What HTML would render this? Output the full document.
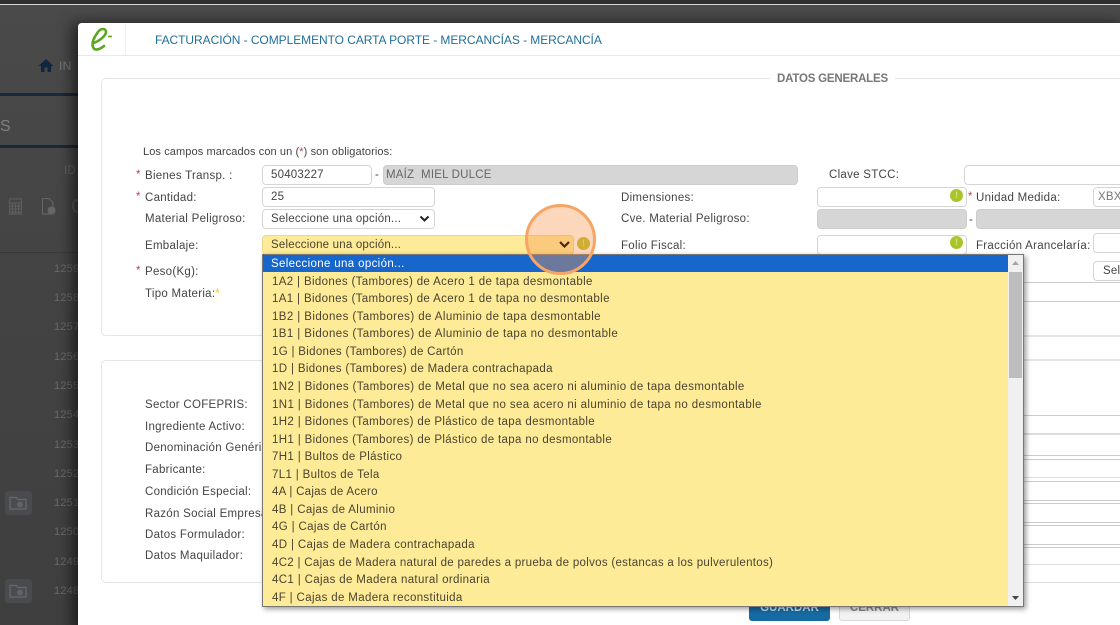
<!DOCTYPE html>
<html lang="es"><head><meta charset="utf-8"><title>Facturación</title>
<style>
html,body{margin:0;padding:0;width:1120px;height:625px;overflow:hidden;background:#444}
#r{position:relative;width:1120px;height:625px;overflow:hidden;font-family:"Liberation Sans",sans-serif;font-size:11.5px;color:#444;filter:blur(.3px)}
#r div,#r span.a,#r svg{position:absolute}
.t{white-space:nowrap;line-height:14px;letter-spacing:.28px;margin-top:1px}
.i{background:#fff;border:1px solid #d5d5d5;border-radius:4px;box-sizing:border-box;white-space:nowrap;line-height:19px;padding-left:8px;letter-spacing:.2px;color:#444;overflow:hidden}
.g{background:#d6d6d6;border:1px solid #ccc;border-radius:4px;box-sizing:border-box}
.l{background:#ccc;height:1px;left:1024px;width:96px}
.d{width:13px;height:13px;border-radius:50%;background:#a8c62c;color:#d5e27a;font-size:9px;line-height:13px;text-align:center;font-weight:bold}
.s{color:#b04a50}
.o{left:272px;white-space:nowrap;line-height:17px;height:17px;letter-spacing:.35px;color:#4b4330;margin-top:1px}
.b{color:#6a6a6a;font-size:11px;white-space:nowrap;left:54px;letter-spacing:.2px}
</style></head><body><div id="r">
<!-- backdrop -->
<div style="left:0;top:0;width:1120px;height:625px;background:linear-gradient(#4a4a4a,#434343 300px,#3f3f3f)"></div>
<div style="left:0;top:0;width:1120px;height:4px;background:#2e2e2e"></div>
<div style="left:0;top:4px;width:1120px;height:1px;background:#d8d8d8"></div>
<svg style="left:38px;top:58px" width="16" height="15" viewBox="0 0 16 15"><path d="M8 1 L0.5 8 H3 V14 H6.5 V9.5 H9.5 V14 H13 V8 H15.5Z" fill="#10263e"/></svg>
<div class="t" style="left:59px;top:58px;color:#777;font-size:12px">IN</div>
<div style="left:0;top:93px;width:78px;height:3px;background:#17293a"></div>
<div style="left:0;top:145px;width:78px;height:3px;background:#17293a"></div>
<div class="t" style="left:0;top:119px;color:#808080;font-size:16px">S</div>
<div class="t" style="left:64px;top:163px;color:#666">ID</div>
<svg style="left:8px;top:197px" width="15" height="19" viewBox="0 0 15 19"><path d="M1.5 2H13.5V17H1.5ZM1.5 6H13.5M1.5 9H13.5M1.5 12H13.5M1.5 15H13.5M4.5 6V17M7.5 6V17M10.5 6V17" fill="none" stroke="#5e5e5e" stroke-width="1"/></svg>
<svg style="left:40px;top:197px" width="18" height="19" viewBox="0 0 18 19"><path d="M2.5 1.5H9L13 5.5V17H2.5Z" fill="none" stroke="#666" stroke-width="1"/><circle cx="11.5" cy="13.5" r="4" fill="#666"/></svg>
<div style="left:72px;top:199px;width:10px;height:14px;border:2px solid #5a5a5a;border-radius:50%;box-sizing:border-box"></div>
<div style="left:0;top:252px;width:78px;height:1px;background:#3a3a3a"></div>
<div class="b" style="top:263px">1259</div><div class="b" style="top:292px">1258</div><div class="b" style="top:321px">1257</div><div class="b" style="top:351px">1256</div><div class="b" style="top:380px">1255</div><div class="b" style="top:409px">1254</div><div class="b" style="top:439px">1253</div><div class="b" style="top:468px">1252</div><div class="b" style="top:497px">1251</div><div class="b" style="top:526px">1250</div><div class="b" style="top:556px">1249</div><div class="b" style="top:585px">1248</div>
<div style="left:5px;top:491px;width:27px;height:24px;background:#494b4e;border-radius:3px"></div>
<svg style="left:9px;top:495px" width="20" height="16" viewBox="0 0 20 16"><path d="M1 2.5H7L9 4.5H17V14H1Z" fill="none" stroke="#6a6a72" stroke-width="1.2"/><circle cx="11" cy="9.5" r="3" fill="#62626a"/></svg>
<div style="left:5px;top:579px;width:27px;height:24px;background:#494b4e;border-radius:3px"></div>
<svg style="left:9px;top:583px" width="20" height="16" viewBox="0 0 20 16"><path d="M1 2.5H7L9 4.5H17V14H1Z" fill="none" stroke="#6a6a72" stroke-width="1.2"/><circle cx="11" cy="9.5" r="3" fill="#62626a"/></svg>
<!-- modal -->
<div style="left:78px;top:23px;width:1050px;height:610px;background:#fff;border-radius:4px 0 0 0;box-shadow:-6px 0 14px rgba(0,0,0,.55)"></div>
<div style="left:78px;top:23px;width:1042px;height:32px;background:#fff;border-bottom:1px solid #e8e8e8;border-radius:4px 0 0 0"></div>
<div style="left:125px;top:24px;width:1px;height:31px;background:#eee"></div>
<svg style="left:88px;top:25px" width="28" height="28" viewBox="0 0 28 28"><path d="M5 18 C10 17 18 11 18 7 C18 3 13 3 10 7 C6 12 3.5 18 5 22 C6.5 26 11 25 16 21" fill="none" stroke="#5ba51f" stroke-width="2.6" stroke-linecap="round"/><path d="M20 11.5H24" stroke="#5ba51f" stroke-width="1.6"/></svg>
<div class="t" style="left:155px;top:32px;color:#1f6f98;font-size:12px;letter-spacing:-.06px">FACTURACIÓN - COMPLEMENTO CARTA PORTE - MERCANCÍAS - MERCANCÍA</div>
<!-- sections -->
<div style="left:101px;top:78px;width:1030px;height:258px;border:1px solid #e6e6e6;border-radius:5px;box-sizing:border-box"></div>
<div style="left:770px;top:70px;width:125px;height:16px;background:#fff"></div>
<div class="t" style="left:777px;top:71px;color:#777;font-weight:bold;font-size:11.5px;letter-spacing:-.2px">DATOS GENERALES</div>
<div style="left:101px;top:360px;width:1030px;height:223px;border:1px solid #e6e6e6;border-radius:5px;box-sizing:border-box"></div>
<div class="t" style="left:143px;top:144px;font-size:11px;letter-spacing:.1px">Los campos marcados con un (<span class="s">*</span>) son obligatorios:</div>
<div class="t s" style="left:136px;top:167px">*</div><div class="t" style="left:145px;top:168px">Bienes Transp. :</div>
<div class="i" style="left:262px;top:165px;width:110px;height:20px">50403227</div>
<div class="t" style="left:375px;top:167px">-</div>
<div class="g" style="left:383px;top:165px;width:415px;height:20px;color:#666;padding-left:2px;line-height:19px;white-space:nowrap;letter-spacing:.2px">MAÍZ&nbsp; MIEL DULCE</div>
<div class="t" style="left:829px;top:167px">Clave STCC:</div>
<div class="i" style="left:964px;top:165px;width:170px;height:20px"></div>
<div class="t s" style="left:136px;top:189px">*</div><div class="t" style="left:145px;top:190px">Cantidad:</div>
<div class="i" style="left:262px;top:187px;width:173px;height:20px">25</div>
<div class="t" style="left:621px;top:190px">Dimensiones:</div>
<div class="i" style="left:817px;top:187px;width:150px;height:20px"></div>
<div class="d" style="left:950px;top:189px">!</div>
<div class="t s" style="left:968px;top:189px">*</div><div class="t" style="left:976px;top:190px">Unidad Medida:</div>
<div class="i" style="left:1093px;top:187px;width:40px;height:20px;padding-left:4px;color:#777">XBX</div>
<div class="t" style="left:145px;top:211px">Material Peligroso:</div>
<div class="i" style="left:262px;top:209px;width:173px;height:20px">Seleccione una opción...</div>
<svg style="left:419px;top:215px" width="11" height="8" viewBox="0 0 11 8"><path d="M1.5 1.5 L5.5 5.5 L9.5 1.5" fill="none" stroke="#222" stroke-width="2"/></svg>
<div class="t" style="left:621px;top:211px">Cve. Material Peligroso:</div>
<div class="g" style="left:817px;top:209px;width:150px;height:20px"></div>
<div class="t" style="left:969px;top:212px">-</div>
<div class="g" style="left:976px;top:209px;width:150px;height:20px"></div>
<div class="t" style="left:145px;top:238px">Embalaje:</div>
<div class="i" style="left:262px;top:235px;width:312px;height:20px;background:#fdeb98;border-color:#ebd987;color:#4b4330">Seleccione una opción...</div>
<div class="d" style="left:577px;top:237px;background:#b9bb26">!</div>
<div class="t" style="left:621px;top:238px">Folio Fiscal:</div>
<div class="i" style="left:817px;top:235px;width:150px;height:20px"></div>
<div class="d" style="left:950px;top:236px">!</div>
<div class="t" style="left:976px;top:238px">Fracción Arancelaría:</div>
<div class="i" style="left:1093px;top:233px;width:40px;height:20px"></div>
<div class="i" style="left:1093px;top:261px;width:40px;height:20px;padding-left:9px">Seleccionar</div>
<div class="l" style="top:282px"></div><div class="l" style="top:301px"></div>
<div class="t s" style="left:136px;top:263px">*</div><div class="t" style="left:145px;top:264px">Peso(Kg):</div>
<div class="t" style="left:145px;top:286px">Tipo Materia:<span style="color:#e8cf3a">*</span></div>
<div class="t" style="left:145px;top:397px">Sector COFEPRIS:</div>
<div class="t" style="left:145px;top:419px">Ingrediente Activo:</div>
<div class="t" style="left:145px;top:440px">Denominación Genérica:</div>
<div class="t" style="left:145px;top:462px">Fabricante:</div>
<div class="t" style="left:145px;top:484px">Condición Especial:</div>
<div class="t" style="left:145px;top:506px">Razón Social Empresa:</div>
<div class="t" style="left:145px;top:527px">Datos Formulador:</div>
<div class="t" style="left:145px;top:548px">Datos Maquilador:</div>
<div class="l" style="top:336px;background:#e6e6e6"></div><div class="l" style="top:359px;background:#e6e6e6"></div>
<div class="l" style="top:415px"></div><div class="l" style="top:433px;background:#ddd;height:2px"></div><div class="l" style="top:455px"></div><div class="l" style="top:459px"></div><div class="l" style="top:477px;background:#ddd"></div><div class="l" style="top:481px"></div><div class="l" style="top:500px"></div><div class="l" style="top:503px"></div><div class="l" style="top:522px"></div><div class="l" style="top:525px"></div><div class="l" style="top:544px"></div><div class="l" style="top:547px"></div><div class="l" style="top:564px;background:#ddd"></div><div class="l" style="top:582px;background:#ddd"></div>
<!-- buttons -->
<div style="left:749px;top:595px;width:81px;height:26px;background:#166ba3;border-radius:3px;color:#cfe3ef;font-weight:bold;font-size:11.5px;text-align:center;line-height:26px">GUARDAR</div>
<div style="left:839px;top:595px;width:71px;height:26px;background:#f3f3f3;border:1px solid #d8d8d8;box-sizing:border-box;border-radius:3px;color:#888;font-weight:bold;font-size:11.5px;text-align:center;line-height:25px">CERRAR</div>
<!-- dropdown -->
<div style="left:262px;top:254px;width:762px;height:353px;background:#fdeb98;border:1px solid #777;box-sizing:border-box;box-shadow:2px 2px 5px rgba(0,0,0,.4)"></div>
<div style="left:263px;top:255px;width:745px;height:17px;background:#1766cb"></div>
<div style="left:1008px;top:255px;width:15px;height:351px;background:#f0f0f0"></div>
<div style="left:1009px;top:272px;width:13px;height:106px;background:#bdbdbd"></div>
<svg style="left:1011px;top:260px" width="9" height="6"><path d="M4.5 1 L8 5 H1Z" fill="#a5a5a5"/></svg>
<svg style="left:1011px;top:595px" width="9" height="6"><path d="M1 1 H8 L4.5 5Z" fill="#444"/></svg>
<div class="o" style="left:271px;top:255px;color:#fff">Seleccione una opción...</div>
<div class="o" style="top:273px">1A2 | Bidones (Tambores) de Acero 1 de tapa desmontable</div>
<div class="o" style="top:290px">1A1 | Bidones (Tambores) de Acero 1 de tapa no desmontable</div>
<div class="o" style="top:308px;letter-spacing:.41px">1B2 | Bidones (Tambores) de Aluminio de tapa desmontable</div>
<div class="o" style="top:325px;letter-spacing:.41px">1B1 | Bidones (Tambores) de Aluminio de tapa no desmontable</div>
<div class="o" style="top:343px;letter-spacing:.31px">1G | Bidones (Tambores) de Cartón</div>
<div class="o" style="top:360px">1D | Bidones (Tambores) de Madera contrachapada</div>
<div class="o" style="top:378px;letter-spacing:.38px">1N2 | Bidones (Tambores) de Metal que no sea acero ni aluminio de tapa desmontable</div>
<div class="o" style="top:396px;letter-spacing:.38px">1N1 | Bidones (Tambores) de Metal que no sea acero ni aluminio de tapa no desmontable</div>
<div class="o" style="top:413px">1H2 | Bidones (Tambores) de Plástico de tapa desmontable</div>
<div class="o" style="top:431px">1H1 | Bidones (Tambores) de Plástico de tapa no desmontable</div>
<div class="o" style="top:448px">7H1 | Bultos de Plástico</div>
<div class="o" style="top:466px">7L1 | Bultos de Tela</div>
<div class="o" style="top:483px;letter-spacing:.26px">4A | Cajas de Acero</div>
<div class="o" style="top:501px">4B | Cajas de Aluminio</div>
<div class="o" style="top:518px">4G | Cajas de Cartón</div>
<div class="o" style="top:536px">4D | Cajas de Madera contrachapada</div>
<div class="o" style="top:554px;letter-spacing:.3px">4C2 | Cajas de Madera natural de paredes a prueba de polvos (estancas a los pulverulentos)</div>
<div class="o" style="top:571px">4C1 | Cajas de Madera natural ordinaria</div>
<div class="o" style="top:589px">4F | Cajas de Madera reconstituida</div>
<!-- highlight -->
<div style="left:525px;top:204px;width:71px;height:71px;border-radius:50%;box-sizing:border-box;border:3px solid #f6a566;background:rgba(248,150,80,.38)"></div>
<svg style="left:558px;top:240px" width="13" height="9" viewBox="0 0 13 9"><path d="M2 2 L6.5 6.5 L11 2" fill="none" stroke="#4a2a10" stroke-width="2.2"/></svg>
</div></body></html>
